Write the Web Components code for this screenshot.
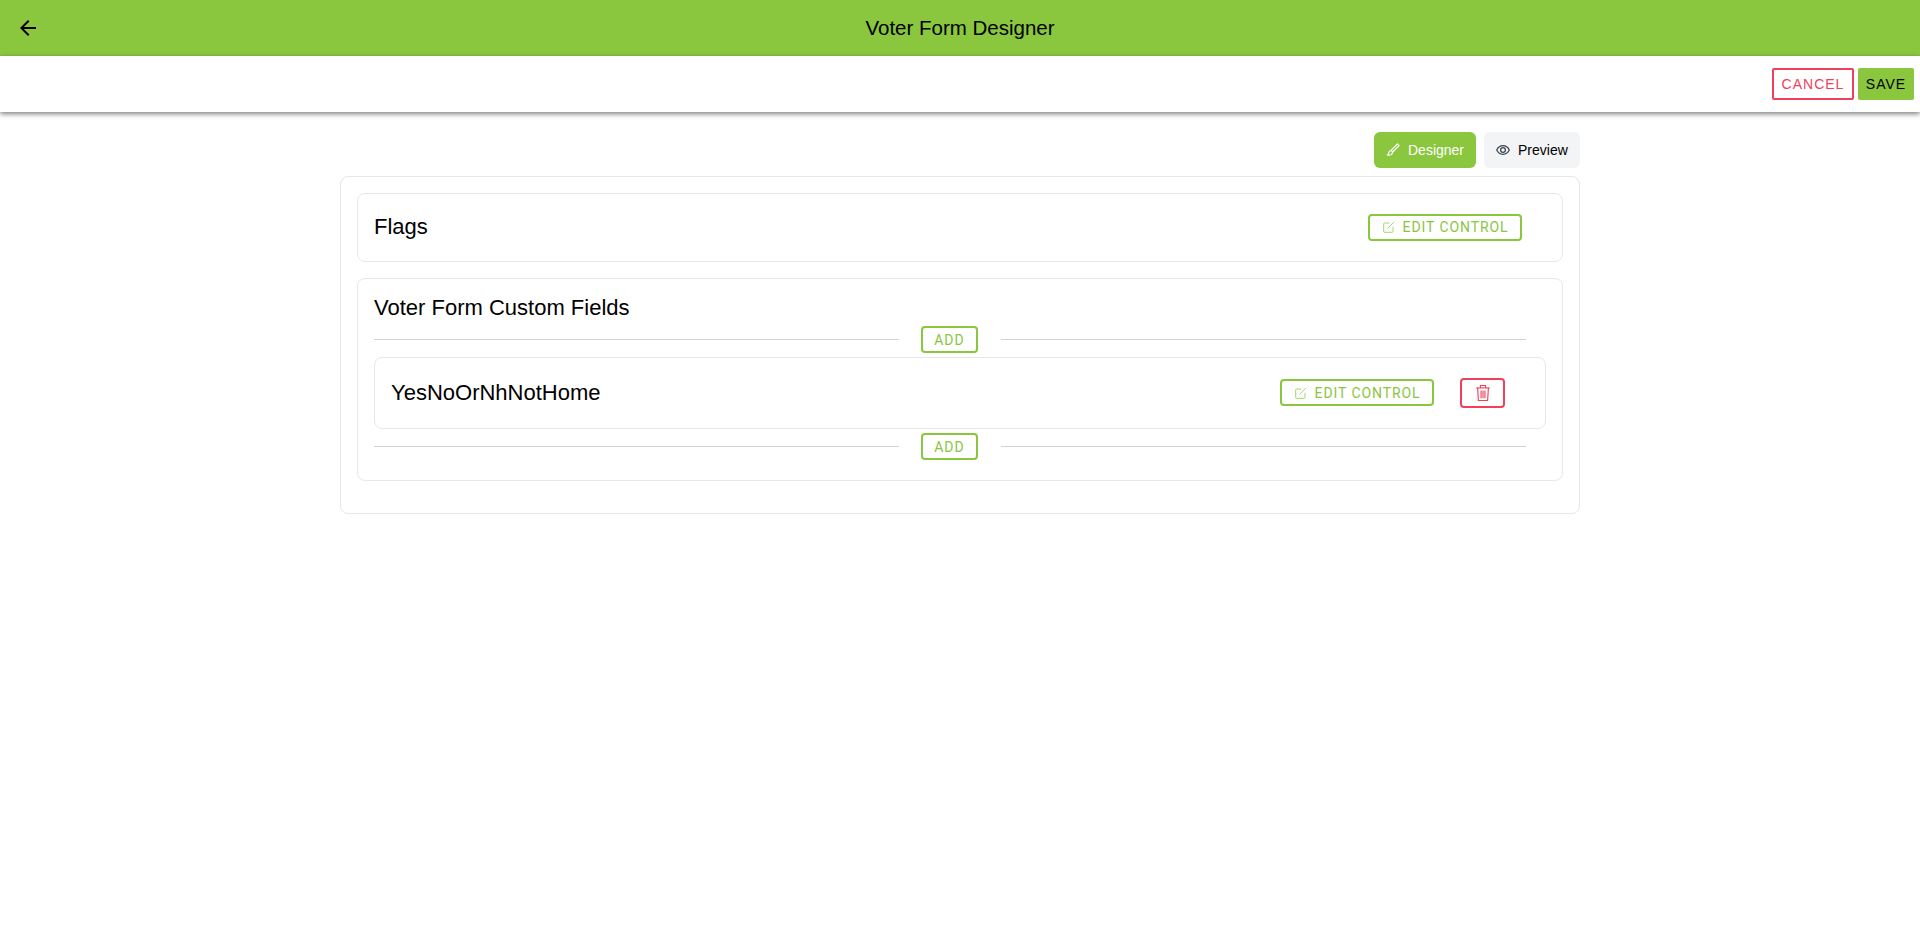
<!DOCTYPE html>
<html>
<head>
<meta charset="utf-8">
<title>Voter Form Designer</title>
<style>
  html, body { margin: 0; padding: 0; background: #fff; }
  body { font-family: "Liberation Sans", Arial, sans-serif; color: #000; }
</style>
</head>
<body>

<designer-page>
  <app-header slot="header">Voter Form Designer</app-header>
  <action-bar slot="actions"></action-bar>

  <view-tabs slot="tabs"></view-tabs>

  <form-card>
    <control-row label="Flags"></control-row>
    <field-section label="Voter Form Custom Fields">
      <control-row label="YesNoOrNhNotHome" deletable nested></control-row>
    </field-section>
  </form-card>
</designer-page>

<script>
const GREEN = "#8ac63e";
const RED = "#ef405c";

const ICONS = {
  back: `<svg width="24" height="24" viewBox="0 0 24 24" fill="currentColor"><path d="M20 11H7.83l5.59-5.59L12 4l-8 8 8 8 1.41-1.41L7.83 13H20v-2z"/></svg>`,
  brush: `<svg width="14" height="14" viewBox="0 0 14 14" fill="none" stroke="currentColor" stroke-width="1.2" stroke-linejoin="round"><path d="M11.4 1l1.700 1.700-6.300 6.300-1.700-1.700z"/><path d="M5 7.500c-1.400.1-2 1-2.200 2.200-.1.800-.5 1.500-1.400 2.100 1.700.5 3.600.2 4.400-.8.600-.7.800-1.400.7-2"/></svg>`,
  eye: `<svg width="14" height="14" viewBox="0 0 14 14" fill="none" stroke="currentColor" stroke-width="1.2"><path d="M.7 7C2.100 4.200 4.300 2.700 7 2.700S11.900 4.200 13.300 7c-1.400 2.800-3.600 4.300-6.300 4.300S2.100 9.800.7 7z"/><circle cx="7" cy="7" r="2.400"/></svg>`,
  edit: `<svg width="12" height="12" viewBox="0 0 12 12" fill="none" stroke="currentColor" stroke-width="1"><path d="M6.200 2H1.500a.8.8 0 0 0-.8.800v7.700a.8.8 0 0 0 .8.800h7.700a.8.8 0 0 0 .8-.8V5.800"/><path d="M4.600 7.400L11 1"/></svg>`,
  trash: `<svg width="18" height="18" viewBox="0 0 16 16" fill="none" stroke="currentColor" stroke-width="1"><path d="M2 3.500h12"/><path d="M5.700 3.500V1.300h4.600v2.200"/><path d="M3.200 3.500l.7 11.200h8.200l.7-11.200"/><path d="M6.300 5.800v6.800M8 5.800v6.800M9.700 5.800v6.800"/></svg>`
};

class DesignerPage extends HTMLElement {
  constructor() {
    super();
    this.attachShadow({ mode: "open" });
    this.shadowRoot.innerHTML = `
      <style>
        :host { display: block; min-height: 945px; }
        .content {
          width: 1240px;
          margin: 0 auto;
          padding-top: 20px;
        }
        .tabs { display: flex; justify-content: flex-end; margin-bottom: 8px; }
      </style>
      <slot name="header"></slot>
      <slot name="actions"></slot>
      <div class="content">
        <div class="tabs"><slot name="tabs"></slot></div>
        <slot></slot>
      </div>`;
  }
}

class AppHeader extends HTMLElement {
  constructor() {
    super();
    this.attachShadow({ mode: "open" });
    this.shadowRoot.innerHTML = `
      <style>
        :host {
          display: grid;
          grid-template-columns: 1fr auto 1fr;
          align-items: center;
          height: 56px;
          background: ${GREEN};
          color: #000;
        }
        .back { display: flex; padding-left: 16px; }
        .title { font-size: 20.5px; line-height: 56px; }
      </style>
      <div class="back">${ICONS.back}</div>
      <div class="title"><slot></slot></div>
      <div></div>`;
  }
}

class ActionBar extends HTMLElement {
  constructor() {
    super();
    this.attachShadow({ mode: "open" });
    this.shadowRoot.innerHTML = `
      <style>
        :host {
          display: flex;
          justify-content: flex-end;
          align-items: center;
          gap: 4px;
          height: 56px;
          padding-right: 6px;
          background: #fff;
          box-shadow: 0 2px 5px rgba(0, 0, 0, 0.5);
          position: relative;
        }
        button {
          height: 32px;
          padding: 0;
          font: 14px "Liberation Sans", Arial, sans-serif;
          letter-spacing: 1px;
          border-radius: 2px;
          box-sizing: border-box;
        }
        .cancel { width: 82px; background: #fff; color: ${RED}; border: 2px solid ${RED}; }
        .save { width: 56px; background: ${GREEN}; color: #000; border: 0; }
      </style>
      <button class="cancel">CANCEL</button>
      <button class="save">SAVE</button>`;
  }
}

class ViewTabs extends HTMLElement {
  constructor() {
    super();
    this.attachShadow({ mode: "open" });
    this.shadowRoot.innerHTML = `
      <style>
        :host { display: flex; gap: 8px; }
        .tab {
          display: flex;
          align-items: center;
          gap: 8px;
          height: 36px;
          padding: 0 12px;
          box-sizing: border-box;
          border-radius: 6px;
          font: 14px "Liberation Sans", Arial, sans-serif;
        }
        .tab svg { display: block; flex: none; }
        .active { width: 102px; background: ${GREEN}; color: #fff; }
        .idle { width: 96px; background: #f3f4f6; color: #000; }
        .idle svg { color: #374151; }
      </style>
      <div class="tab active">${ICONS.brush}<span>Designer</span></div>
      <div class="tab idle">${ICONS.eye}<span>Preview</span></div>`;
  }
}

class FormCard extends HTMLElement {
  constructor() {
    super();
    this.attachShadow({ mode: "open" });
    this.shadowRoot.innerHTML = `
      <style>
        :host {
          display: flex;
          flex-direction: column;
          gap: 16px;
          padding: 16px 16px 32px;
          border: 1px solid #e5e7eb;
          border-radius: 8px;
        }
      </style>
      <slot></slot>`;
  }
}

class OutlineButton extends HTMLElement {
  constructor() {
    super();
    this.attachShadow({ mode: "open" });
    this.shadowRoot.innerHTML = `
      <style>
        :host {
          display: inline-flex;
          align-items: center;
          justify-content: center;
          gap: 8px;
          box-sizing: border-box;
          height: 27px;
          border: 2px solid ${GREEN};
          border-radius: 4px;
          color: ${GREEN};
          background: #fff;
          font: 14px "Roboto", "Liberation Sans", sans-serif;
          letter-spacing: 1px;
          flex: none;
        }
      </style>
      <slot></slot>`;
  }
}

class ControlRow extends HTMLElement {
  connectedCallback() {
    if (this.shadowRoot) return;
    this.attachShadow({ mode: "open" });
    const nested = this.hasAttribute("nested");
    const deletable = this.hasAttribute("deletable");
    this.shadowRoot.innerHTML = `
      <style>
        :host {
          display: flex;
          align-items: center;
          box-sizing: border-box;
          height: ${nested ? 72 : 69}px;
          padding: 0 40px 1px 16px;
          border: 1px solid #e5e7eb;
          border-radius: 8px;
        }
        .label { flex: 1; font-size: 22px; line-height: 28px; }
        outline-button { width: 154px; padding-left: 1px; letter-spacing: .9px; }
        .icon { display: block; height: 12px; color: ${GREEN}; opacity: .75; }
        .icon svg { display: block; }
        .delete {
          display: flex;
          align-items: center;
          justify-content: center;
          width: 45px;
          height: 30px;
          margin-left: 26px;
          box-sizing: border-box;
          border: 2px solid ${RED};
          border-radius: 4px;
          color: ${RED};
        }
        .delete svg { display: block; }
      </style>
      <div class="label">${this.getAttribute("label")}</div>
      <outline-button><span class="icon">${ICONS.edit}</span>EDIT CONTROL</outline-button>
      ${deletable ? `<div class="delete">${ICONS.trash}</div>` : ""}`;
  }
}

class AddDivider extends HTMLElement {
  constructor() {
    super();
    this.attachShadow({ mode: "open" });
    this.shadowRoot.innerHTML = `
      <style>
        :host {
          display: grid;
          grid-template-columns: 525px 57px 1fr;
          align-items: center;
          column-gap: 22px;
          height: 27px;
          margin-right: 20px;
        }
        .line { height: 1px; background: #d1d1d8; }
        .line:last-child { margin-left: 1px; }
      </style>
      <div class="line"></div>
      <outline-button>ADD</outline-button>
      <div class="line"></div>`;
  }
}

class FieldSection extends HTMLElement {
  connectedCallback() {
    if (this.shadowRoot) return;
    this.attachShadow({ mode: "open" });
    this.shadowRoot.innerHTML = `
      <style>
        :host {
          display: block;
          padding: 17px 16px 20px;
          border: 1px solid #e5e7eb;
          border-radius: 8px;
        }
        .title { font-size: 22px; line-height: 24px; margin-bottom: 6px; }
        .top { margin-bottom: 4px; }
        .bottom { margin-top: 4px; }
      </style>
      <div class="title">${this.getAttribute("label")}</div>
      <add-divider class="top"></add-divider>
      <slot></slot>
      <add-divider class="bottom"></add-divider>`;
  }
}

customElements.define("designer-page", DesignerPage);
customElements.define("app-header", AppHeader);
customElements.define("action-bar", ActionBar);
customElements.define("view-tabs", ViewTabs);
customElements.define("form-card", FormCard);
customElements.define("outline-button", OutlineButton);
customElements.define("control-row", ControlRow);
customElements.define("add-divider", AddDivider);
customElements.define("field-section", FieldSection);
</script>
</body>
</html>
